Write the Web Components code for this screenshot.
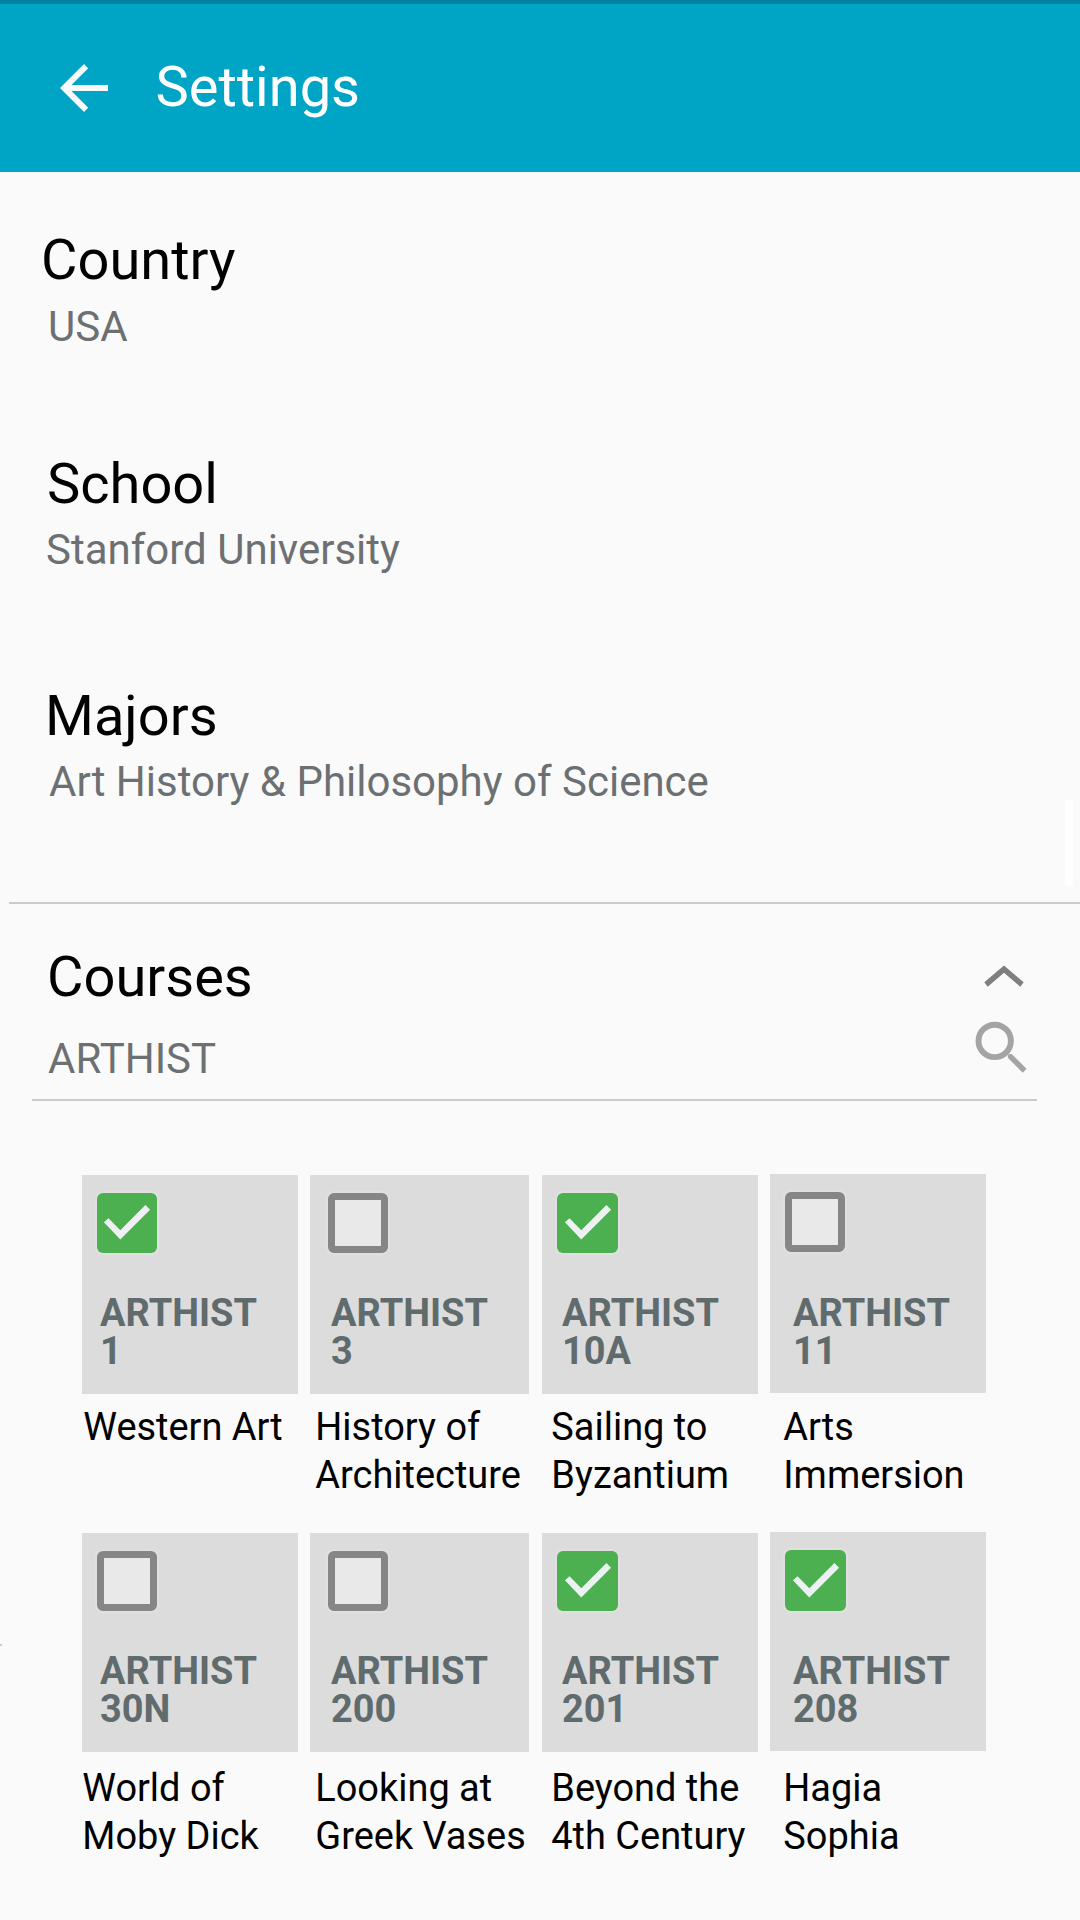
<!DOCTYPE html>
<html lang="en">
<head>
<meta charset="utf-8">
<title>Settings</title>
<style>
  html, body { margin: 0; padding: 0; }
  body { width: 1080px; height: 1920px; overflow: hidden; background: #fafafa; font-family: Roboto, "Noto Sans", sans-serif; color: #000; }
</style>
</head>
<body>
<settings-page>
  <app-bar slot="bar">Settings</app-bar>
  <setting-item style="--top:58px; --gap:12px; --title-x:41px; --value-x:48px"><span slot="title">Country</span><span slot="value">USA</span></setting-item>
  <setting-item style="--top:102px; --title-x:47px; --value-x:46px"><span slot="title">School</span><span slot="value">Stanford University</span></setting-item>
  <setting-item style="--top:111px; --title-x:45px; --value-x:49px"><span slot="title">Majors</span><span slot="value">Art History &amp; Philosophy of Science</span></setting-item>
  <rule-line style="--before:95px; --left:9px; --right:0px"></rule-line>
  <course-search><span slot="title">Courses</span><span slot="value">ARTHIST</span></course-search>
  <rule-line style="--before:15px; --left:32px; --right:43px"></rule-line>
  <course-row style="--before:74px">
    <course-card checked style="--name-x:1.3px"><span slot="code">ARTHIST<br>1</span>Western Art</course-card>
    <course-card style="--w:219px; --box-x:18px; --code-x:21px; --name-x:5.3px"><span slot="code">ARTHIST<br>3</span>History of<br>Architecture</course-card>
    <course-card checked wide style="--code-x:20px; --name-x:9.3px"><span slot="code">ARTHIST<br>10A</span>Sailing to<br>Byzantium</course-card>
    <course-card raised style="--code-x:23px; --name-x:13.3px"><span slot="code">ARTHIST<br>11</span>Arts<br>Immersion</course-card>
  </course-row>
  <course-row style="--before:33px; --name-gap:12px">
    <course-card style="--name-x:0.3px"><span slot="code">ARTHIST<br>30N</span>World of<br>Moby Dick</course-card>
    <course-card style="--w:219px; --box-x:18px; --code-x:21px; --name-x:5.3px"><span slot="code">ARTHIST<br>200</span>Looking at<br>Greek Vases</course-card>
    <course-card checked wide style="--code-x:20px; --name-x:9.3px"><span slot="code">ARTHIST<br>201</span>Beyond the<br>4th Century</course-card>
    <course-card checked wide tall raised style="--code-x:23px; --name-x:13.3px"><span slot="code">ARTHIST<br>208</span>Hagia<br>Sophia</course-card>
  </course-row>
</settings-page>
<script>
const define = (name, markup, setup) => customElements.define(name, class extends HTMLElement {
  constructor() {
    super();
    const root = this.attachShadow({ mode: 'open' });
    root.innerHTML = markup;
    if (setup) setup(this, root);
  }
});

define('settings-page', `
  <style>
    :host { display: flex; flex-direction: column; position: relative; width: 1080px; height: 1920px; background: #fafafa; }
    .thumb { position: absolute; left: 1065px; top: 800px; width: 8px; height: 85px; background: #fff; }
    .tick { position: absolute; left: 0; top: 1644px; width: 2px; height: 2px; background: #cbcbcb; }
  </style>
  <slot name="bar"></slot><slot></slot>
  <div class="thumb"></div><div class="tick"></div>`);

define('app-bar', `
  <style>
    :host { display: flex; box-sizing: border-box; height: 172px; padding: 48px 0 0 48px; border-top: 4px solid #0083a0; background: #00a5c5; color: #fff; }
    svg { display: block; width: 72px; height: 72px; flex: none; }
    .title { margin-left: 35.5px; margin-top: 5px; font-size: 56px; line-height: 60px; }
  </style>
  <svg viewBox="0 0 24 24" fill="#fafafa"><path d="M20 11H7.83l5.59-5.59L12 4l-8 8 8 8 1.41-1.41L7.83 13H20v-2z"/></svg>
  <div class="title"><slot></slot></div>`);

define('setting-item', `
  <style>
    :host { display: flex; flex-direction: column; gap: var(--gap, 11px); margin-top: var(--top); white-space: nowrap; }
    .title { padding-left: var(--title-x); font-size: 56px; line-height: 60px; }
    .value { padding-left: var(--value-x); font-size: 42px; line-height: 50px; color: #6d7072; }
  </style>
  <div class="title"><slot name="title"></slot></div>
  <div class="value"><slot name="value"></slot></div>`);

define('rule-line', `
  <style>:host { display: block; height: 2px; margin: var(--before) var(--right) 0 var(--left); background: #cbcbcb; }</style>`);

define('course-search', `
  <style>
    :host { display: block; margin-top: 43px; }
    .row { display: flex; justify-content: space-between; align-items: flex-start; }
    svg { display: block; }
    .title { padding-left: 47px; font-size: 56px; line-height: 60px; }
    .value { padding: 27px 0 0 48px; font-size: 42px; line-height: 50px; color: #6d7072; }
    .up { margin: 18px 56px 0 0; }
    .find { margin: 14px 53px 0 0; }
  </style>
  <div class="row">
    <div class="title"><slot name="title"></slot></div>
    <svg class="up" width="40" height="22" viewBox="984 965 40 22"><path fill="#7f7f7f" d="M1004 965.5 1023.7 982.3 1020.3 986.7 1004 972.8 987.7 986.7 984.3 982.3Z"/></svg>
  </div>
  <div class="row">
    <div class="value"><slot name="value"></slot></div>
    <svg class="find" width="52" height="52" viewBox="975 1021 52 52"><circle cx="994.7" cy="1040.9" r="16.2" fill="none" stroke="#a3a5a4" stroke-width="5.9"/><path fill="#a3a5a4" d="M1007.6 1055.6 1009 1054 1011.7 1054 1026.5 1068.8 1022.7 1072.8 1008 1058Z"/></svg>
  </div>`);

define('course-row', `
  <style>:host { display: grid; grid-template-columns: 228px 232px 228px 216px; margin-top: var(--before); padding-left: 82px; height: 325px; }</style>
  <slot></slot>`);

define('check-box', `
  <style>
    :host { display: block; box-sizing: border-box; width: 60px; height: 60px; border-radius: 6px; border: 7px solid #868686; background: #e9e9e9; background-clip: padding-box; box-shadow: 0 0 0 2px #e0e0e0; }
    :host([checked]) { border: 0; background: #4caf50; display: flex; justify-content: flex-end; align-items: flex-end; }
    :host([wide]) { width: 61px; }
    :host([tall]) { height: 61px; }
    svg { display: none; width: 60px; height: 60px; flex: none; }
    :host([checked]) svg { display: block; }
  </style>
  <svg viewBox="0 0 60 60"><path fill="#eef1f3" d="M6.9 29.3 11.5 25.3 23.3 37.2 48.4 12 53.1 16.7 23.3 46.4Z"/></svg>`);

define('course-card', `
  <style>
    :host { display: flex; flex-direction: column; --rise: 0px; }
    :host([raised]) { --rise: 1px; margin-top: -1px; }
    :host([raised]) .code { margin-top: 42px; }
    :host([tall]) .code { margin-top: 41px; }
    .tile { box-sizing: border-box; width: var(--w, 216px); height: 219px; padding-top: 18px; background: #dcdcdc; }
    check-box { margin-left: var(--box-x, 15px); }
    .code { margin: 41px 0 0 var(--code-x, 18px); font-size: 37.95px; font-weight: 700; line-height: 38px; color: #5f6b6d; white-space: nowrap; }
    .name { margin: calc(var(--name-gap, 9px) + var(--rise)) 0 0 var(--name-x, 0); font-size: 37.95px; line-height: 48px; white-space: nowrap; }
  </style>
  <div class="tile"><check-box></check-box><div class="code"><slot name="code"></slot></div></div>
  <div class="name"><slot></slot></div>`,
  (host, root) => {
    const box = root.querySelector('check-box');
    for (const a of ['checked', 'wide', 'tall']) if (host.hasAttribute(a)) box.setAttribute(a, '');
  });
</script>
</body>
</html>
